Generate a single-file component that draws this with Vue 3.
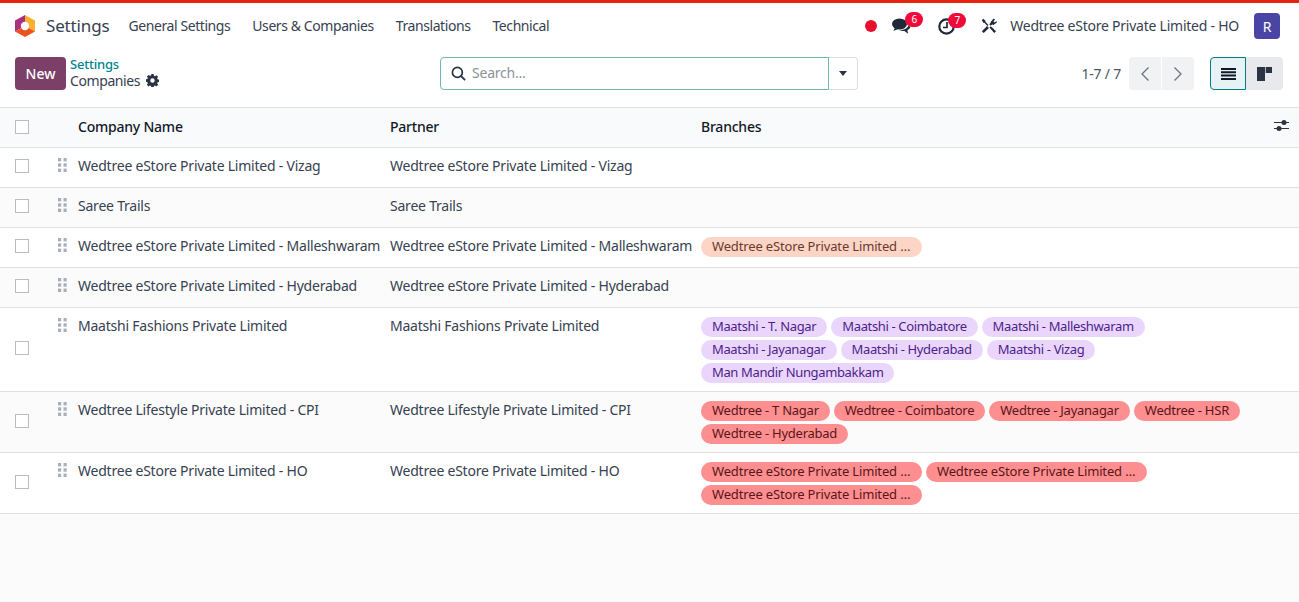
<script setup>
const menus = ['General Settings', 'Users & Companies', 'Translations', 'Technical']
const long = 'Wedtree eStore Private Limited …'
const rows = [
  { name: 'Wedtree eStore Private Limited - Vizag', tone: '', tags: [] },
  { name: 'Saree Trails', tone: '', tags: [] },
  { name: 'Wedtree eStore Private Limited - Malleshwaram', tone: 'peach', tags: [long] },
  { name: 'Wedtree eStore Private Limited - Hyderabad', tone: '', tags: [] },
  { name: 'Maatshi Fashions Private Limited', tone: 'purple', tags: ['Maatshi - T. Nagar', 'Maatshi - Coimbatore', 'Maatshi - Malleshwaram', 'Maatshi - Jayanagar', 'Maatshi - Hyderabad', 'Maatshi - Vizag', 'Man Mandir Nungambakkam'] },
  { name: 'Wedtree Lifestyle Private Limited - CPI', tone: 'red', tags: ['Wedtree - T Nagar', 'Wedtree - Coimbatore', 'Wedtree - Jayanagar', 'Wedtree - HSR', 'Wedtree - Hyderabad'] },
  { name: 'Wedtree eStore Private Limited - HO', tone: 'red', tags: [long, long, long] },
]
</script>

<template>
  <div class="page">
    <header class="topbar">
      <svg class="logo" viewBox="0 0 20 22" width="20" height="22">
        <path d="M10 0 L0 5.500 V16.500 L10 11 Z" fill="#a8307f" />
        <path d="M10 0 L20 5.500 V16.500 L10 11 Z" fill="#fbb130" />
        <path d="M0 16.500 L10 22 L20 16.500 L10 11 Z" fill="#f0501e" />
        <circle cx="10" cy="11" r="4.200" fill="#fff" />
      </svg>
      <span class="app">Settings</span>
      <nav class="menu">
        <span v-for="m in menus" :key="m">{{ m }}</span>
      </nav>
      <div class="systray">
        <span class="dot"></span>
        <span class="tray chat">
          <svg viewBox="0 0 19 16" width="19" height="16"><ellipse cx="7.500" cy="6" rx="7.500" ry="5.500" fill="#1f2937"/><path d="M3 9.500 1.500 13 6 11z" fill="#1f2937"/><path d="M7 12.300c1.500.7 3.500 1 5.500.6l3.500 2.800-.6-3.600c1.500-.7 2.600-1.800 3-3-.5-.7-1.200-1.300-2.100-1.600-.7 3-4.300 4.800-9.300 4.800z" fill="#1f2937"/></svg>
          <b class="badge">6</b>
        </span>
        <span class="tray clock">
          <svg viewBox="0 0 18 17" width="18" height="17"><circle cx="8.500" cy="8.500" r="7.200" fill="none" stroke="#1f2937" stroke-width="2.200"/><path d="M9 4V9.500H5" fill="none" stroke="#1f2937" stroke-width="1.700"/></svg>
          <b class="badge">7</b>
        </span>
        <svg class="tools" viewBox="0 0 16 16" width="16" height="16">
          <path d="M1.800 14.200 7 9" stroke="#1f2937" stroke-width="2.600" fill="none"/>
          <path d="M9 7 11.500 4.500" stroke="#1f2937" stroke-width="2.200" fill="none"/>
          <path d="M10 3.500 12.800 0.500 14 1.500 12.500 3.500 13.500 4.500 15.500 3 15.800 4.500 12.500 7 9.500 5.500z" fill="#1f2937"/>
          <path d="M0.800 2.300 2.300 0.800 4.500 2.800 4.300 3.800 7.500 7 6.500 8 3.300 4.800 2.300 4.800z" fill="#1f2937"/>
          <path d="M8.500 9.500 9.800 8.200 15 13.200 13.200 15z" fill="#1f2937"/>
        </svg>
        <span class="company">Wedtree eStore Private Limited - HO</span>
        <span class="avatar">R</span>
      </div>
    </header>

    <section class="controls">
      <div class="left">
        <button class="new">New</button>
        <div class="crumbs">
          <a>Settings</a>
          <div class="current">Companies
            <svg viewBox="0 0 16 16" width="13" height="13"><path fill="#2b3443" fill-rule="evenodd" d="M6.600 0h2.800l.4 2.100 1.300.6 1.800-1.200 2 2-1.200 1.800.6 1.300 2.100.4v2.800l-2.100.4-.6 1.300 1.200 1.800-2 2-1.800-1.200-1.300.6-.4 2.100H6.600l-.4-2.100-1.300-.6-1.800 1.200-2-2 1.200-1.800-.6-1.300L-.4 9.400V6.600l2.100-.4.6-1.300L1.100 3.100l2-2 1.800 1.200 1.300-.6zM8 5.300a2.700 2.700 0 1 0 0 5.400 2.700 2.700 0 0 0 0-5.400z"/></svg>
          </div>
        </div>
      </div>
      <div class="search">
        <div class="field">
          <svg viewBox="0 0 16 16" width="15" height="15"><circle cx="6.800" cy="6.800" r="5.300" fill="none" stroke="#2b3443" stroke-width="1.800"/><path d="M10.800 10.800 15 15" stroke="#2b3443" stroke-width="2"/></svg>
          <span class="hint">Search...</span>
        </div>
        <div class="drop"><i class="caret"></i></div>
      </div>
      <div class="right">
        <span class="count">1-7 / 7</span>
        <div class="pager">
          <button><svg viewBox="0 0 10 16" width="10" height="16"><path d="M8.500 1.500 2 8l6.500 6.500" fill="none" stroke="#6b7280" stroke-width="1.300"/></svg></button>
          <button><svg viewBox="0 0 10 16" width="10" height="16"><path d="M1.500 1.500 8 8l-6.500 6.500" fill="none" stroke="#6b7280" stroke-width="1.300"/></svg></button>
        </div>
        <div class="views">
          <button class="active"><svg viewBox="0 0 15 12" width="15" height="12"><path d="M0 0h15v2H0zM0 3.300h15v2H0zM0 6.600h15v2H0zM0 9.900h15V12H0z" fill="#111827"/></svg></button>
          <button><svg viewBox="0 0 15 14" width="15" height="14"><path d="M0 0h8v14H0z" fill="#2b3443"/><path d="M8.700 0H15v6H8.700z" fill="#2b3443"/></svg></button>
        </div>
      </div>
    </section>

    <table class="list">
      <colgroup>
        <col class="c-check" /><col class="c-handle" /><col class="c-name" /><col class="c-partner" /><col /><col class="c-opt" />
      </colgroup>
      <thead>
        <tr>
          <th class="mid"><span class="box"></span></th>
          <th></th>
          <th>Company Name</th>
          <th>Partner</th>
          <th>Branches</th>
          <th class="opt">
            <svg viewBox="0 0 15 13" width="15" height="13"><path d="M0 3.500h15M0 9.500h15" stroke="#2b3443" stroke-width="1.200"/><circle cx="10" cy="3.500" r="2.500" fill="#2b3443"/><circle cx="5" cy="9.500" r="2.500" fill="#2b3443"/></svg>
          </th>
        </tr>
      </thead>
      <tbody>
        <tr v-for="(r, i) in rows" :key="i" :class="{ odd: i % 2 === 1 }">
          <td class="mid"><span class="box"></span></td>
          <td class="grip"><svg viewBox="0 0 9 14" width="9" height="14"><g fill="#a9b0bb"><rect width="3.200" height="3.400"/><rect x="5.500" width="3.200" height="3.400"/><rect y="5.300" width="3.200" height="3.400"/><rect x="5.500" y="5.300" width="3.200" height="3.400"/><rect y="10.600" width="3.200" height="3.400"/><rect x="5.500" y="10.600" width="3.200" height="3.400"/></g></svg></td>
          <td>{{ r.name }}</td>
          <td>{{ r.name }}</td>
          <td class="branches" colspan="2">
            <div class="tags">
              <span v-for="(t, j) in r.tags" :key="j" class="tag" :class="[r.tone, { wide: t === long }]">{{ t }}</span>
            </div>
          </td>
        </tr>
      </tbody>
    </table>
  </div>
</template>

<style>
html, body { background: #fbfbfc; }
</style>

<style scoped>
.page {
  height: 602px;
  overflow: hidden;
  font-family: "Noto Sans", "Liberation Sans", sans-serif;
  font-size: 14px;
  letter-spacing: -0.22px;
  color: #374151;
  background: #fbfbfc;
}
.topbar {
  height: 40px;
  padding: 3px 19px 0 15px;
  border-top: 3px solid #e5260f;
  display: flex;
  align-items: center;
  background: #fff;
}
.logo { margin-right: 11px; }
.app { font-size: 17px; color: #374151; margin-right: 19px; letter-spacing: -0.15px; margin-top: -2px; }
.menu { display: flex; gap: 22px; color: #374151; letter-spacing: -0.42px; margin-top: -2px; }
.systray { margin-left: auto; display: flex; align-items: center; }
.dot { width: 12px; height: 12px; border-radius: 50%; background: #e8102f; margin-right: 15px; }
.tray { position: relative; display: flex; }
.chat { margin-right: 27px; }
.clock { margin-right: 25px; }
.badge {
  position: absolute; top: -6px; left: 13px;
  min-width: 16px; height: 15px; line-height: 15px; padding: 0 1px;
  border-radius: 8px; background: #ef0a3a; color: #fff;
  font-size: 10px; font-weight: 400; text-align: center; letter-spacing: 0;
}
.clock .badge { left: 10px; top: -5px; }
.tools { margin-right: 13px; }
.company { margin-right: 15px; margin-top: -2px; letter-spacing: -0.24px; }
.avatar {
  width: 26px; height: 26px; border-radius: 4px; background: #4a45a5; color: #fff;
  display: flex; align-items: center; justify-content: center; font-size: 14px;
}
.controls {
  display: grid;
  grid-template-columns: 1fr 418px 1fr;
  align-items: center;
  padding: 11px 16px 17px 15px;
  background: #fff;
}
.left { display: flex; align-items: center; gap: 4px; }
button { font-family: inherit; border: none; padding: 0; }
.new {
  width: 51px; height: 33px; border-radius: 4px; background: #7b3f68; color: #fff;
  font-size: 14px; font-weight: 500;
}
.crumbs { margin-top: -1px; }
.crumbs a { display: block; color: #01848c; font-size: 13px; font-weight: 500; line-height: 15px; }
.current { display: flex; align-items: center; gap: 6px; color: #374151; line-height: 17px; letter-spacing: -0.4px; }
.search { display: flex; height: 33px; }
.field {
  flex: 1; display: flex; align-items: center; gap: 6px; padding-left: 10px;
  border: 1px solid #6fb5b1; border-radius: 4px 0 0 4px; color: #8b919b;
}
.hint { margin-top: -2px; }
.drop {
  width: 28px; display: flex; align-items: center; justify-content: center;
  border: 1px solid #dadde1; border-left: none; border-radius: 0 4px 4px 0;
}
.caret { border: 4.5px solid transparent; border-top: 5px solid #2b3443; border-bottom: none; }
.right { display: flex; justify-content: flex-end; align-items: center; }
.count { margin-right: 8px; color: #4b5563; }
.pager { display: flex; gap: 1px; margin-right: 16px; }
.pager button {
  width: 32px; height: 33px; background: #f1f2f4; display: flex; align-items: center; justify-content: center;
}
.pager button:first-child { border-radius: 4px 0 0 4px; }
.pager button:last-child { border-radius: 0 4px 4px 0; }
.views { display: flex; }
.views button {
  width: 37px; height: 33px; background: #e7e9ed; display: flex; align-items: center; justify-content: center;
  border-radius: 0 4px 4px 0;
}
.views .active { width: 36px; background: #e6f2f3; border: 1px solid #017e84; border-radius: 4px 0 0 4px; }
.list {
  width: 100%;
  table-layout: fixed;
  border-collapse: separate;
  border-spacing: 0;
}
.c-check { width: 46px; }
.c-handle { width: 24px; }
.c-name { width: 312px; }
.c-partner { width: 311px; }
.c-opt { width: 34px; }
th, td {
  padding: 7px 8px 11px;
  line-height: 21px;
  border-bottom: 1px solid #dee0e3;
  text-align: left;
  vertical-align: top;
  white-space: nowrap;
  background: #fff;
}
th {
  padding: 8px 8px 10px;
  background: #f9fafb;
  border-top: 1px solid #dee0e3;
  color: #111827;
  font-weight: 500;
}
.mid { vertical-align: middle; padding: 0 0 0 15px; }
.box { display: block; width: 14px; height: 14px; margin-bottom: 3px; border: 1px solid #b9bcc1; background: #fff; box-sizing: border-box; }
th .box { margin-bottom: 1px; }
.opt { text-align: right; padding-right: 10px; }
.opt svg { display: block; margin: 3px 0 0 auto; }
.grip { padding: 10px 0 0 12px; line-height: 0; }
tr.odd td { background: #fbfbfb; }
.branches { padding: 9px 8px 8px; white-space: normal; }
.tags { display: flex; flex-wrap: wrap; gap: 3px 4px; max-width: 560px; }
.tag {
  height: 20px; line-height: 19px; padding: 0 11px; border-radius: 10px; font-size: 13px;
  box-sizing: border-box; white-space: nowrap; letter-spacing: -0.25px;
}
.wide { width: 221px; letter-spacing: -0.15px; }
.peach { background: #fdd5c6; color: #6a3a2a; }
.purple { background: #ead6fc; color: #4c1e8a; letter-spacing: -0.36px; }
.red { background: #fd8f91; color: #5b1517; }
</style>
